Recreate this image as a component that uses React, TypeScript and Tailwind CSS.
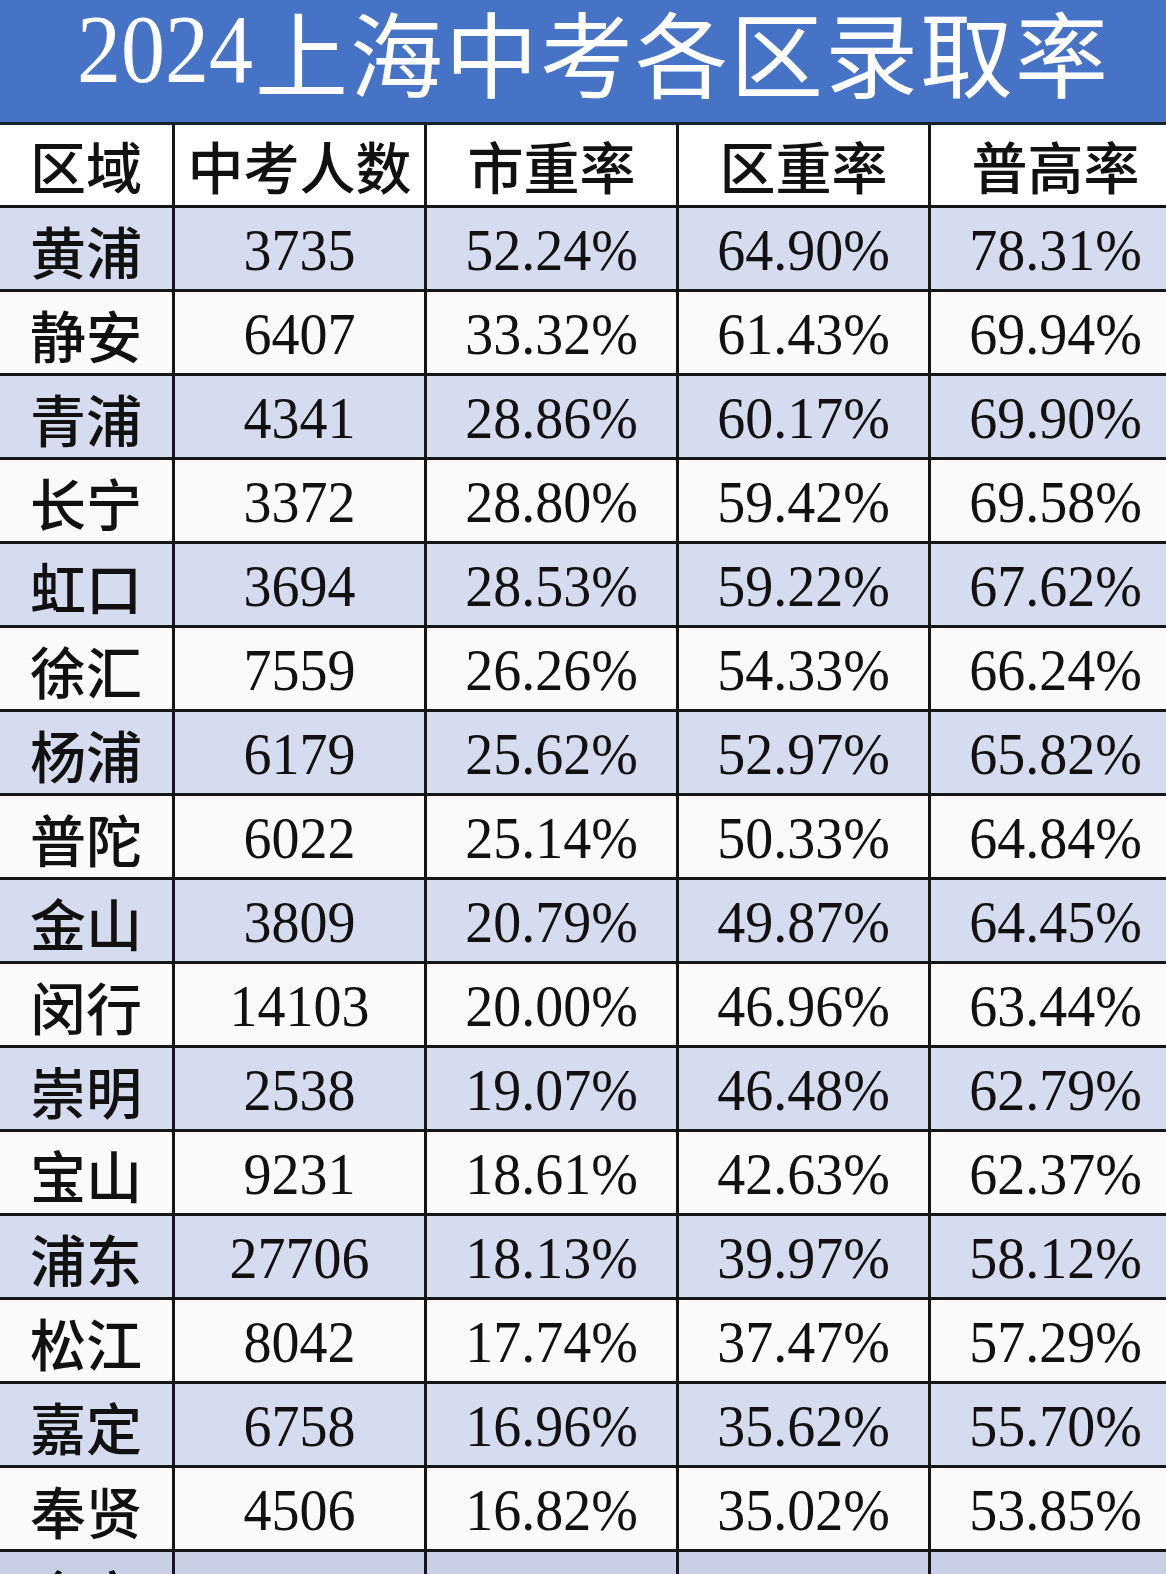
import React from "react";

const rows = [
  ["黄浦", "3735", "52.24%", "64.90%", "78.31%"],
  ["静安", "6407", "33.32%", "61.43%", "69.94%"],
  ["青浦", "4341", "28.86%", "60.17%", "69.90%"],
  ["长宁", "3372", "28.80%", "59.42%", "69.58%"],
  ["虹口", "3694", "28.53%", "59.22%", "67.62%"],
  ["徐汇", "7559", "26.26%", "54.33%", "66.24%"],
  ["杨浦", "6179", "25.62%", "52.97%", "65.82%"],
  ["普陀", "6022", "25.14%", "50.33%", "64.84%"],
  ["金山", "3809", "20.79%", "49.87%", "64.45%"],
  ["闵行", "14103", "20.00%", "46.96%", "63.44%"],
  ["崇明", "2538", "19.07%", "46.48%", "62.79%"],
  ["宝山", "9231", "18.61%", "42.63%", "62.37%"],
  ["浦东", "27706", "18.13%", "39.97%", "58.12%"],
  ["松江", "8042", "17.74%", "37.47%", "57.29%"],
  ["嘉定", "6758", "16.96%", "35.62%", "55.70%"],
  ["奉贤", "4506", "16.82%", "35.02%", "53.85%"],
  ["全市", "118002", "22.48%", "47.86%", "63.91%"],
];

const headers = ["区域", "中考人数", "市重率", "区重率", "普高率"];

const cjk = "font-['Noto_Sans_CJK_SC',sans-serif]";
const serif = "font-['Liberation_Serif','Noto_Sans_CJK_SC',serif]";

export default function App() {
  return (
    <div className="w-[1166px] h-[1574px] overflow-hidden bg-white text-[#111]">
      <div className="w-[1190px]">
        <div className="h-[125px] bg-[#4673c6] border-b-[3px] border-[#1b1f2a] flex items-center whitespace-nowrap pl-[77px] pb-[22px] text-white">
          <span className={`${serif} text-[88px] leading-none scale-y-110`}>2024</span>
          <span className={`${cjk} text-[93px] leading-none tracking-[2px] ml-[2px]`}>
            上海中考各区录取率
          </span>
        </div>

        <div className="grid grid-cols-[172px_252px_252px_252px_262px] h-[83px] border-b-[3px] border-[#161616] bg-white">
          {headers.map((h, i) => (
            <div
              key={h}
              className={`flex items-center justify-center ${cjk} font-medium text-[56px] leading-none ${
                i > 0 ? "border-l-[3px] border-[#161616]" : ""
              } ${i === 4 ? "pr-[10px]" : ""}`}
            >
              {h}
            </div>
          ))}
        </div>

        {rows.map((r, idx) => (
          <div
            key={r[0]}
            className={`grid grid-cols-[172px_252px_252px_252px_262px] h-[84px] border-b-[3px] border-[#161616] ${
              idx === 16 ? "bg-[#c9d0e6]" : idx % 2 === 0 ? "bg-[#d6dcef]" : "bg-[#fafafa]"
            }`}
          >
            {r.map((c, i) => (
              <div
                key={i}
                className={`flex items-center justify-center pt-[2px] ${
                  i === 0
                    ? `${cjk} font-medium text-[56px] leading-none`
                    : `${serif} text-[56px] leading-none border-l-[3px] border-[#161616]`
                } ${i === 4 ? "pr-[10px]" : ""}`}
              >
                <span className={i === 0 ? "" : "scale-y-105"}>{c}</span>
              </div>
            ))}
          </div>
        ))}
      </div>
    </div>
  );
}
